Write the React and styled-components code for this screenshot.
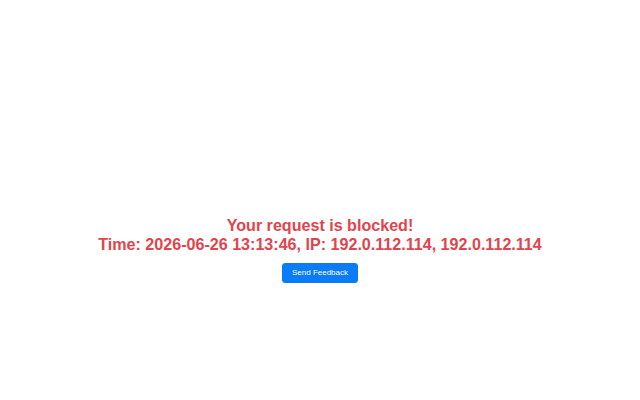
import React from "react";
import styled, { createGlobalStyle } from "styled-components";

const Global = createGlobalStyle`
  html, body { margin: 0; padding: 0; background: #ffffff; }
  body { font-family: "Liberation Sans", Arial, sans-serif; }
`;

const Page = styled.main`
  display: flex;
  flex-direction: column;
  align-items: center;
  padding-top: 216px;
  min-height: 400px;
  box-sizing: border-box;
`;

const Message = styled.h1`
  margin: 0;
  font-size: 16.1px;
  font-weight: 700;
  line-height: 18.5px;
  color: #e0444d;
  text-align: center;
`;

const Button = styled.button`
  margin-top: 10px;
  font-family: "Liberation Sans", Arial, sans-serif;
  font-size: 8px;
  line-height: 10px;
  padding: 4px 9px;
  color: #ffffff;
  background: #0a7cf8;
  border: 1px solid #0a7cf8;
  border-radius: 3px;
  cursor: pointer;
`;

export default function App() {
  return (
    <>
      <Global />
      <Page>
        <Message>
          Your request is blocked!
          <br />
          Time: 2026-06-26 13:13:46, IP: 192.0.112.114, 192.0.112.114
        </Message>
        <Button type="button">Send Feedback</Button>
      </Page>
    </>
  );
}
